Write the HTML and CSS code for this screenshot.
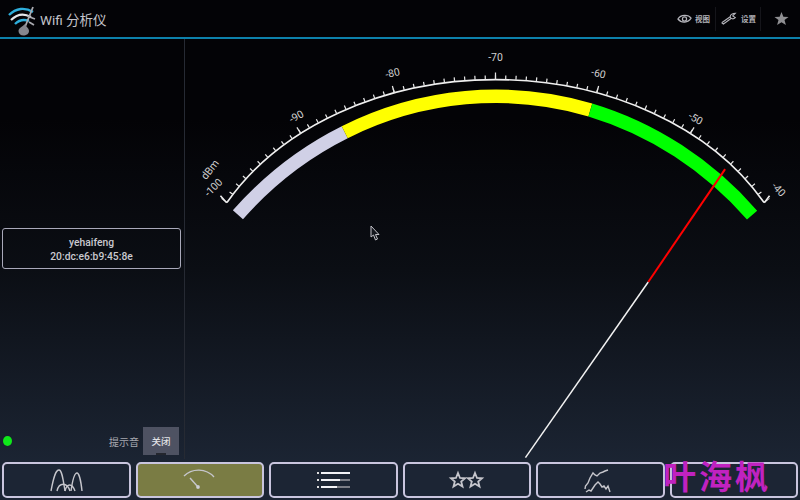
FILE: index.html
```html
<!DOCTYPE html>
<html lang="zh">

<head>
  <meta charset="UTF-8">
  <title>Wifi 分析仪</title>
  <link rel="stylesheet" href="styles.css">
</head>

<body>
  <div id="app">
    <header class="topbar">
      <svg class="logo" viewBox="0 0 30 32">
        <path class="logo-cyan" d="M1 10 C8 3 17 2 25 7" />
        <path class="logo-white" d="M3 15 C9 9 16 8 23 12" />
        <path class="logo-cyan" d="M7 19 C11 15 16 14 21 16" />
        <path class="logo-mast" d="M25 2 L17 22 M19 11 L27 14 M21 17 L26 20" />
        <path class="logo-ball" d="M17 19 C18 22 21 23 21 26 C21 29 18 30.500 15.500 30.500 C12.500 30.500 10.500 28.500 10.500 26 C10.500 23 14 22 17 19 Z" />
      </svg>
      <span class="app-title">Wifi 分析仪</span>
      <div class="actions">
        <div class="action action-view">
          <svg class="action-icon" viewBox="0 0 16 12">
            <path d="M1 6 C4 1 12 1 15 5 C12 10 5 11 1 6 Z" />
            <circle cx="8" cy="6" r="2.2" />
          </svg>
          <span>视图</span>
        </div>
        <div class="action action-set">
          <svg class="action-icon wrench" viewBox="0 0 20 14">
            <path d="M2 12 L12 5 M12 5 C12 2 15 1 18 1 L15 4 L18 6 C16 8 13 8 12 5 M2 12 L4 13.5 L13 7" />
          </svg>
          <span>设置</span>
        </div>
        <svg class="fav" viewBox="0 0 16 16">
          <path d="M8 1 L10 6 L15.5 6.3 L11.2 9.6 L12.7 15 L8 12 L3.3 15 L4.8 9.6 L.5 6.3 L6 6 Z" />
        </svg>
      </div>
    </header>

    <div class="content">
      <aside class="side">
        <div class="ap-card">
          <div class="ap-name">yehaifeng</div>
          <div class="ap-mac">20:dc:e6:b9:45:8e</div>
        </div>
        <div class="sound-row">
          <span class="led"></span>
          <span class="sound-label">提示音</span>
          <button class="sound-btn">关闭</button>
        </div>
      </aside>

      <main class="gauge-wrap">
        <!-- viewBox uses screen coordinates so gauge points read the same as the picture -->
        <svg class="gauge" viewBox="184 39 616 420">
          <path class="band band-gray" d="M237 214.7 A350 366 0 0 1 344 132" />
          <path class="band band-yellow" d="M344 132 A350 366 0 0 1 590 109.7" />
          <path class="band band-green" d="M590 109.7 A350 366 0 0 1 752 215" />

          <path class="scale-line" d="M226 202.5 A305 233 0 0 1 764 202.5" />
          <path class="ticks-minor" pathLength="600" d="M224.2 201.3 A307 235 0 0 1 765.8 201.3" />
          <path class="ticks-major" pathLength="600" d="M223 200.6 A308.5 236.5 0 0 1 767 200.6" />
          <path class="scale-line" d="M225.7 202.7 L219.5 195.7 M764.300 202.7 L769.500 195.7" />

          <g class="scale-text">
            <text transform="translate(209.500 170) rotate(-52)">dBm</text>
            <text transform="translate(213 188) rotate(-45)">-100</text>
            <text transform="translate(296 117) rotate(-30)">-90</text>
            <text transform="translate(392 73.500) rotate(-13)">-80</text>
            <text transform="translate(495 58)">-70</text>
            <text transform="translate(598 74) rotate(13)">-60</text>
            <text transform="translate(695 119) rotate(30)">-50</text>
            <text transform="translate(778 190) rotate(47)">-40</text>
          </g>

          <line class="needle-white" x1="525" y1="458" x2="648" y2="282" />
          <line class="needle-red" x1="648" y1="282" x2="725" y2="169" />
        </svg>
        <svg class="cursor" viewBox="0 0 10 16">
          <path d="M1 1 L1 12 L3.500 10 L5.500 15 L7.500 14 L5.500 9.500 L9 9.500 Z" />
        </svg>
      </main>
    </div>

    <nav class="tabs">
      <div class="tab">
        <svg class="tab-icon" viewBox="0 0 40 26">
          <path d="M5 24 C8 8 10 3 13 3 C16 3 17 12 19 24" />
          <path d="M11 24 C13 15 21 15 24 24" />
          <path d="M19 24 C21 16 26 16 29 24" />
          <path d="M25 24 C27 10 29 6 31 6 C33 6 35 14 36 24" />
        </svg>
      </div>
      <div class="tab tab-active">
        <svg class="tab-icon" viewBox="0 0 40 26">
          <path d="M4 9 C12 1 26 1 34 10" />
          <path d="M18 20 L10 11" />
          <circle class="icon-dot" cx="18" cy="20" r="1.2" />
        </svg>
      </div>
      <div class="tab">
        <div class="list-icon">
          <div class="list-row"><i></i><b><em class="fill-full"></em></b></div>
          <div class="list-row"><i></i><b><em class="fill-mid"></em></b></div>
          <div class="list-row"><i></i><b><em class="fill-low"></em></b></div>
        </div>
      </div>
      <div class="tab">
        <svg class="tab-icon icon-stars" viewBox="0 0 40 26">
          <path d="M11 6 L13 11 L18 11.300 L14.200 14.500 L15.500 19.500 L11 16.800 L6.500 19.500 L7.800 14.500 L4 11.300 L9 11 Z" />
          <path d="M28 6 L30 11 L35 11.300 L31.200 14.500 L32.500 19.500 L28 16.800 L23.500 19.500 L24.800 14.500 L21 11.300 L26 11 Z" />
        </svg>
      </div>
      <div class="tab">
        <svg class="tab-icon" viewBox="0 0 40 26">
          <path d="M5 22 L5.500 19 L8 16 L10 11 L13 6 L15 8 L17 9 L20 6 L23 5 L25 4 L28 3" />
          <path d="M6 25 L9 23 L11 24 L13 21 L15 18 L18 15 L20 17 L22 20 L24 19 L26 22 L28 19 L30 25" />
        </svg>
      </div>
      <div class="tab"></div>
    </nav>

    <div class="watermark">叶海枫</div>
  </div>
</body>

</html>
```

FILE: styles.css
```css
/* reset */
html,
body,
div,
span,
button {
  margin: 0;
  padding: 0;
  box-sizing: border-box;
}

body {
  width: 800px;
  height: 500px;
  overflow: hidden;
  font-family: Roboto, "Noto Sans CJK SC", sans-serif;
  color: #c9c9cf;
}

#app {
  position: relative;
  display: flex;
  flex-direction: column;
  width: 800px;
  height: 500px;
  background: linear-gradient(#030306 0, #030306 120px, #0b0e14 270px, #1c2534 470px, #1c2534 100%);
}

/* top bar */
.topbar {
  display: flex;
  align-items: center;
  height: 39px;
  padding-left: 8px;
  border-bottom: 2px solid #0d81ab;
}

.logo {
  width: 30px;
  height: 32px;
  margin-top: 5px;
  fill: none;
}

.logo-cyan {
  stroke: #2eaedb;
  stroke-width: 2.4;
}

.logo-white {
  stroke: #e4e6ea;
  stroke-width: 2.2;
}

.logo-mast {
  stroke: #a9aab0;
  stroke-width: 1.8;
}

.logo-ball {
  fill: #85868e;
}

.app-title {
  margin-left: 2px;
  font-size: 13.5px;
  color: #c4c4ca;
}

.actions {
  display: flex;
  align-items: center;
  margin-left: auto;
  height: 100%;
}

.action {
  display: flex;
  align-items: center;
  height: 24px;
  font-size: 7.5px;
  font-weight: 700;
  color: #b4b4ba;
}

.action-view {
  gap: 3px;
  padding-right: 5px;
  border-right: 1px solid #15151a;
}

.action-set {
  gap: 4px;
  padding: 0 4px;
  border-right: 1px solid #15151a;
}

.action-icon {
  width: 15px;
  height: 12px;
  fill: none;
  stroke: #b4b4ba;
  stroke-width: 1.3;
}

.action-icon.wrench {
  width: 17px;
  height: 13px;
}

.fav {
  width: 15px;
  height: 15px;
  margin: 0 11px 0 13px;
  fill: #8f8f92;
}

/* middle */
.content {
  display: flex;
  height: 420px;
}

.side {
  display: flex;
  flex-direction: column;
  width: 185px;
  padding: 189px 3px 0 2px;
  border-right: 1px solid #262a33;
}

.ap-card {
  height: 41px;
  padding-top: 7px;
  border: 1.5px solid #a9a9ba;
  border-radius: 3px;
  text-align: center;
  font-size: 10.3px;
  line-height: 14px;
  font-weight: 500;
}

.sound-row {
  display: flex;
  align-items: center;
  margin-top: 158px;
  height: 28px;
  padding-left: 1px;
}

.led {
  width: 9px;
  height: 10px;
  border-radius: 50%;
  background: #0fe81a;
}

.sound-label {
  margin-left: 97px;
  font-size: 10px;
  color: #a7a9b0;
}

.sound-btn {
  position: relative;
  width: 36px;
  height: 28px;
  margin-left: 4px;
  border: 0;
  background: #4e5262;
  color: #e2e2e6;
  font-family: inherit;
  font-size: 9.5px;
  font-weight: 500;
}

.sound-btn::after {
  content: "";
  position: absolute;
  left: 13px;
  bottom: 0;
  width: 10px;
  height: 2px;
  background: #23262e;
}

.gauge-wrap {
  position: relative;
  flex: 1;
}

.gauge {
  display: block;
  width: 615px;
  height: 420px;
  fill: none;
}

.band {
  stroke-width: 13.5;
}

.band-gray {
  stroke: #d0d0e6;
}

.band-yellow {
  stroke: #ffff00;
}

.band-green {
  stroke: #00ff00;
}

.scale-line {
  stroke: #f0f0f0;
  stroke-width: 1.6;
}

.ticks-minor {
  stroke: #e4e4e4;
  stroke-width: 4;
  stroke-dasharray: 1.2 8.8;
  stroke-dashoffset: .6;
}

.ticks-major {
  stroke: #e4e4e4;
  stroke-width: 7;
  stroke-dasharray: 1.2 98.8;
  stroke-dashoffset: .6;
}

.scale-text text {
  fill: #d0d0d0;
  stroke: none;
  font-size: 10.5px;
  text-anchor: middle;
  dominant-baseline: middle;
}

.needle-white {
  stroke: #f2f2f2;
  stroke-width: 1.5;
}

.needle-red {
  stroke: #ff0000;
  stroke-width: 2;
}

.cursor {
  position: absolute;
  left: 185px;
  top: 186px;
  width: 10px;
  height: 16px;
  fill: #14171d;
  stroke: #c2c2c8;
  stroke-width: 1;
}

/* bottom tabs */
.tabs {
  display: grid;
  grid-template-columns: repeat(6, 1fr);
  gap: 5px;
  height: 41px;
  padding: 3px 2px 2px;
}

.tab {
  display: flex;
  align-items: center;
  justify-content: center;
  border: 2px solid #c9c5de;
  border-radius: 5px;
}

.tab-active {
  background: #7a7c44;
}

.tab-icon {
  width: 40px;
  height: 26px;
  fill: none;
  stroke: #c6c6cc;
  stroke-width: 1.4;
}

.icon-stars {
  stroke-width: 1.8;
}

.icon-dot {
  fill: #fff;
}

.list-icon {
  display: flex;
  flex-direction: column;
  gap: 4.5px;
  width: 33px;
}

.list-row {
  display: flex;
  align-items: center;
  gap: 2px;
  height: 2.5px;
}

.list-row i {
  width: 2px;
  height: 2px;
  background: #ddd;
}

.list-row b {
  flex: 1;
  height: 2.5px;
  background: #7b7d86;
}

.list-row em {
  display: block;
  height: 2.5px;
  background: #f2f2f6;
}

.fill-full {
  width: 100%;
}

.fill-mid {
  width: 68%;
}

.fill-low {
  width: 55%;
}

.watermark {
  position: absolute;
  left: 663px;
  top: 455px;
  font-family: "Noto Sans CJK SC", sans-serif;
  font-size: 33px;
  line-height: 40px;
  font-weight: 700;
  letter-spacing: 3px;
  color: #c022c0;
  white-space: nowrap;
}
```
